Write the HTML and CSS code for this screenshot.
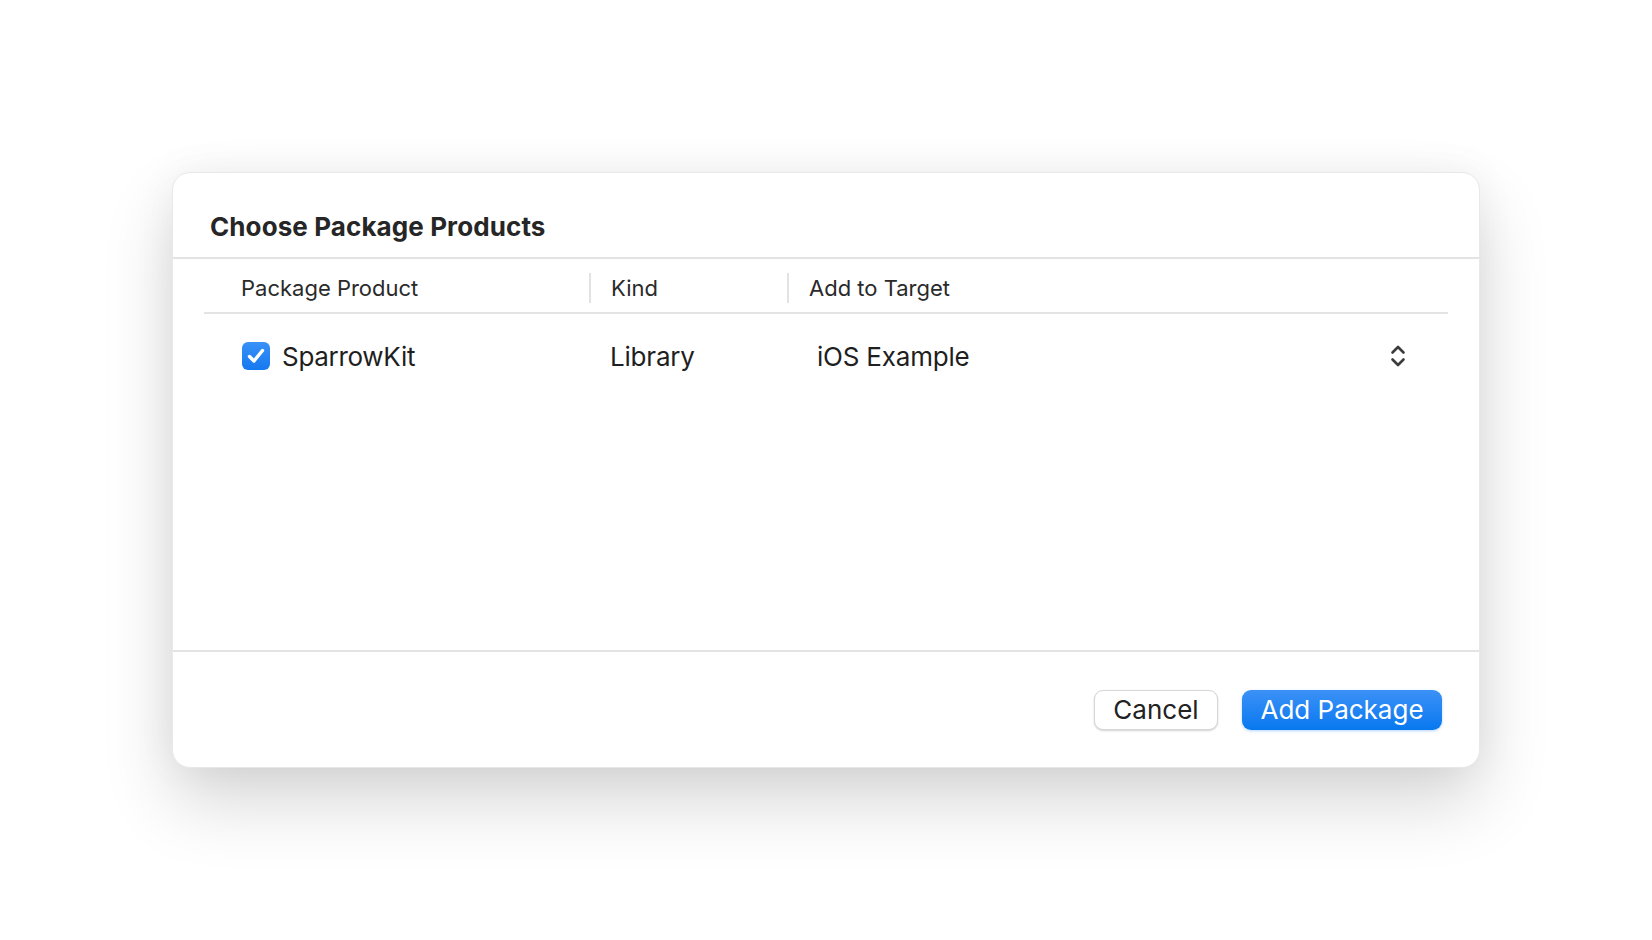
FILE: index.html
```html
<!DOCTYPE html>
<html lang="en">
<head>
<meta charset="utf-8">
<title>Choose Package Products</title>
<link rel="stylesheet" href="styles.css">
</head>
<body>
<div class="dialog">
  <div class="dialog-head">
    <h1 class="title">Choose Package Products</h1>
  </div>
  <div class="table">
    <div class="thead">
      <div class="th th-first">Package Product</div>
      <div class="th th-div">Kind</div>
      <div class="th th-div">Add to Target</div>
    </div>
    <div class="trow">
      <div class="td td-first">
        <span class="check">
          <svg width="28" height="28" viewBox="0 0 28 28"><path d="M7.5 14.5 L12 19 L20.5 8.5" fill="none" stroke="#fff" stroke-width="3.4" stroke-linecap="round" stroke-linejoin="round"/></svg>
        </span>
        <span class="name">SparrowKit</span>
      </div>
      <div class="td td-kind">Library</div>
      <div class="td td-target">
        <span>iOS Example</span>
        <svg class="chev" width="16" height="24" viewBox="0 0 16 24"><path d="M2.5 8.5 L8 3 L13.5 8.5 M2.5 15.5 L8 21 L13.5 15.5" fill="none" stroke="#3c3c3c" stroke-width="2.6" stroke-linecap="round" stroke-linejoin="round"/></svg>
      </div>
    </div>
  </div>
  <div class="dialog-foot">
    <button class="btn btn-cancel">Cancel</button>
    <button class="btn btn-primary">Add Package</button>
  </div>
</div>
</body>
</html>
```
FILE: styles.css
```css
html, body {
  margin: 0;
  padding: 0;
  background: #ffffff;
}
body {
  height: 940px;
  display: flex;
  align-items: center;
  justify-content: center;
  font-family: Inter, "Noto Sans", sans-serif;
  color: #222222;
}
.dialog {
  width: 1308px;
  height: 596px;
  box-sizing: border-box;
  background: #ffffff;
  border: 1px solid #e8e8e8;
  border-radius: 18px;
  box-shadow: 0 34px 70px rgba(0, 0, 0, 0.16), 0 0 40px rgba(0, 0, 0, 0.05);
  display: flex;
  flex-direction: column;
}
.dialog-head {
  height: 86px;
  box-sizing: border-box;
  border-bottom: 2px solid #e3e3e3;
  padding: 22px 0 0 37px;
  display: flex;
  align-items: center;
}
.title {
  margin: 0;
  font-size: 26px;
  font-weight: 700;
  color: #262626;
  letter-spacing: 0.1px;
}
.table {
  flex: 1;
  padding: 0 31px;
}
.thead, .trow {
  display: grid;
  grid-template-columns: 385px 198px 1fr;
}
.thead {
  height: 55px;
  box-sizing: border-box;
  padding-top: 4px;
  border-bottom: 2px solid #e3e3e3;
  align-items: center;
}
.th {
  font-size: 22px;
  color: #2a2a2a;
  height: 30px;
  line-height: 30px;
  box-sizing: border-box;
}
.th-first {
  padding-left: 37px;
}
.th-div {
  border-left: 2px solid #e2e2e2;
  padding-left: 20px;
}
.trow {
  height: 80px;
  box-sizing: border-box;
  padding-top: 4px;
  align-items: center;
  font-size: 26px;
  color: #1f1f1f;
}
.td-first {
  display: flex;
  align-items: center;
  gap: 12px;
  padding-left: 38px;
}
.name {
  letter-spacing: -0.3px;
}
.check {
  width: 28px;
  height: 28px;
  border-radius: 6px;
  background: linear-gradient(#3a91f8, #1579ef);
  display: block;
}
.check svg {
  display: block;
}
.td-kind {
  padding-left: 21px;
  letter-spacing: -0.2px;
}
.td-target {
  display: flex;
  align-items: center;
  justify-content: space-between;
  padding-left: 30px;
  padding-right: 42px;
  letter-spacing: -0.2px;
}
.chev {
  display: block;
}
.dialog-foot {
  height: 117px;
  box-sizing: border-box;
  border-top: 2px solid #e3e3e3;
  display: flex;
  align-items: center;
  justify-content: flex-end;
  gap: 24px;
  padding-right: 37px;
}
.btn {
  height: 40px;
  border-radius: 9px;
  font-family: Inter, "Noto Sans", sans-serif;
  font-size: 26px;
  line-height: 1;
  padding: 0;
  cursor: default;
}
.btn-cancel {
  width: 124px;
  background: #ffffff;
  color: #222222;
  border: 1px solid #d6d6d6;
  box-shadow: 0 1px 2px rgba(0, 0, 0, 0.18);
}
.btn-primary {
  width: 200px;
  background: linear-gradient(#3c91f7, #0878ef);
  color: #ffffff;
  border: none;
  box-shadow: 0 1px 3px rgba(10, 120, 240, 0.3);
}
```
